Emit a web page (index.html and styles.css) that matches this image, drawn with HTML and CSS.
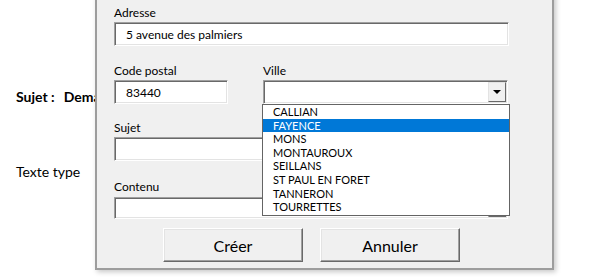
FILE: index.html
```html
<!DOCTYPE html>
<html lang="fr">

<head>
    <meta charset="UTF-8" />
    <meta name="viewport" content="width=device-width, initial-scale=1.0" />
    <title>Nouveau courrier</title>
    <link rel="stylesheet" href="styles.css">
</head>

<body>

    <div class="sheet">
        <div class="row head">
            <span>Sujet :</span>
            <span class="cut">Demande</span>
        </div>
        <div class="row type">Texte type</div>
    </div>

    <div class="dialog">
        <div class="field">
            <label>Adresse</label>
            <div class="input wide">5 avenue des palmiers</div>
        </div>

        <div class="pair">
            <div class="field">
                <label>Code postal</label>
                <div class="input short">83440</div>
            </div>
            <div class="field ville">
                <label>Ville</label>
                <div class="input combo">
                    <span class="drop"><span class="arrow"></span></span>
                </div>
                <ul class="list">
                    <li>CALLIAN</li>
                    <li class="sel">FAYENCE</li>
                    <li>MONS</li>
                    <li>MONTAUROUX</li>
                    <li>SEILLANS</li>
                    <li>ST PAUL EN FORET</li>
                    <li>TANNERON</li>
                    <li>TOURRETTES</li>
                </ul>
            </div>
        </div>

        <div class="field sujet">
            <label>Sujet</label>
            <div class="input full"></div>
        </div>

        <div class="field contenu">
            <label>Contenu</label>
            <div class="input full combo low">
                <span class="drop"><span class="arrow"></span></span>
            </div>
        </div>

        <div class="buttons">
            <button>Créer</button>
            <button>Annuler</button>
        </div>
    </div>

</body>

</html>
```

FILE: styles.css
```css
html,
body {
    margin: 0;
    padding: 0;
    overflow: hidden;
}

body {
    font-family: Lato, "Open Sans", sans-serif;
    background: #fff;
    color: #000;
    width: 600px;
    height: 280px;
    position: relative;
}

/* feuille Excel derriere, coupee par le formulaire */
.sheet {
    padding: 87px 0 0 16px;
    font-size: 14px;
    line-height: 20px;
}

.row.head {
    display: flex;
    gap: 9px;
    width: 79px;
    font-weight: 700;
    white-space: nowrap;
}

.row.head .cut {
    min-width: 0;
    overflow: hidden;
}

.row.type {
    margin-top: 55px;
}

/* userform */
.dialog {
    position: absolute;
    left: 95px;
    top: -20px;
    width: 459px;
    height: 290px;
    box-sizing: border-box;
    padding: 23px 0 0 17px;
    background: #f0f0f0;
    border: 2px solid #9d9d9d;
    box-shadow: 2px 2px 5px rgba(0, 0, 0, 0.22);
    z-index: 1;
}

.field {
    display: flex;
    flex-direction: column;
}

.field label {
    font-size: 12px;
    line-height: 16px;
    margin-bottom: 1px;
}

.input {
    height: 24px;
    box-sizing: border-box;
    background: #fff;
    border: 1px solid;
    border-color: #a0a0a0 #fff #fff #a0a0a0;
    box-shadow: inset 1px 1px 0 #696969, inset -1px -1px 0 #e3e3e3;
    padding-left: 11px;
    font-size: 12px;
    display: flex;
    align-items: center;
}

.input.wide {
    width: 395px;
}

.input.short {
    width: 114px;
}

.input.full {
    width: 394px;
}

.input.combo {
    justify-content: flex-end;
    padding: 1px;
}

.ville .input.combo {
    width: 245px;
}

.input.low {
    height: 22px;
}

.drop {
    width: 18px;
    height: 100%;
    box-sizing: border-box;
    background: #f0f0f0;
    border: 1px solid;
    border-color: #e3e3e3 #696969 #696969 #e3e3e3;
    display: flex;
    align-items: center;
    justify-content: center;
}

.arrow {
    width: 0;
    height: 0;
    border-left: 4px solid transparent;
    border-right: 4px solid transparent;
    border-top: 4px solid #000;
}

.pair {
    display: flex;
    gap: 35px;
    margin-top: 17px;
}

.ville {
    position: relative;
}

.list {
    position: absolute;
    left: -1px;
    top: 41px;
    width: 248px;
    height: 112px;
    box-sizing: border-box;
    margin: 0;
    padding: 0;
    list-style: none;
    background: #fff;
    border: 1px solid #646464;
    z-index: 2;
}

.list li {
    font-size: 11px;
    line-height: 13.6px;
    padding-left: 10px;
}

.list li.sel {
    background: #0078d7;
    color: #fff;
}

.sujet {
    margin-top: 16px;
}

.contenu {
    margin-top: 18px;
}

.contenu label {
    margin-bottom: 2px;
}

.buttons {
    display: flex;
    gap: 17px;
    margin: 9px 0 0 49px;
}

.buttons button {
    width: 140px;
    height: 34px;
    font-family: Lato, "Open Sans", sans-serif;
    font-size: 16px;
    color: #000;
    background: #f0f0f0;
    border: 1px solid;
    border-color: #fff #696969 #696969 #fff;
    box-shadow: inset -1px -1px 0 #a0a0a0, inset 1px 1px 0 #e3e3e3;
    padding: 0;
}
```
